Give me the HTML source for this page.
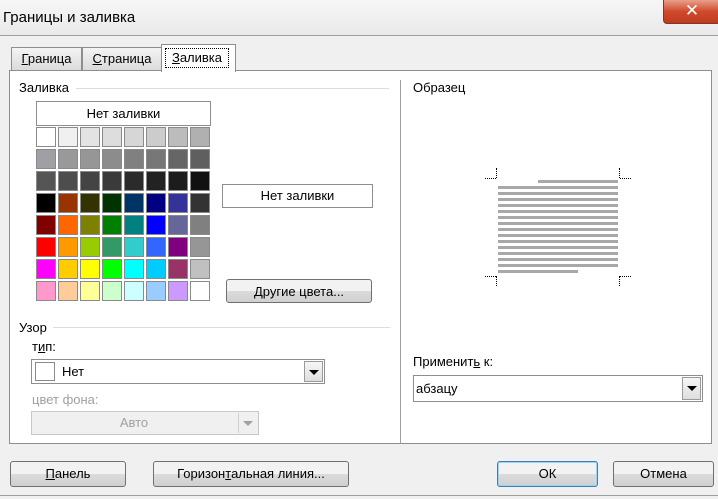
<!DOCTYPE html>
<html><head><meta charset="utf-8"><style>
*{box-sizing:border-box;margin:0;padding:0}
body{width:718px;height:499px;overflow:hidden;background:#f0f0f0;font-family:"Liberation Sans","DejaVu Sans",sans-serif;font-size:13px;color:#000;position:relative}
.a{position:absolute}
.title{left:0;top:0;width:718px;height:36px;background:linear-gradient(#f6f6f6,#eaeaea);border-bottom:1px solid #a0a0a0}
.title span{position:absolute;left:3px;top:9px;font-size:15px}
.close{left:663px;top:0;width:58px;height:24px;border:1px solid #7a3a2a;border-top:none;border-radius:0 0 4px 4px;background:linear-gradient(#e8a08a,#d04a2c 50%,#c03a20);color:#fff;font-size:17px;font-weight:bold;text-align:center;line-height:22px}
.tab{top:47px;height:24px;border:1px solid #8e8e8e;border-bottom:none;background:linear-gradient(#f4f4f4,#dadada);text-align:center;line-height:22px;font-size:13px}
.panel{left:9px;top:70px;width:703px;height:374px;background:#fff;border:1px solid #8e8e8e}
.box{background:#fff;border:1px solid #8e8e8e;text-align:center}
.btn{border:1px solid #707070;border-radius:3px;background:linear-gradient(#f2f2f2 50%,#dcdcdc 50%,#d0d0d0);text-align:center;line-height:23px;font-size:13px}
.cell{position:absolute;width:20px;height:20px;border:1px solid #8a8a8a}
.hr{height:1px;background:#dcdcdc}
.dd{position:absolute;top:1px;right:1px;width:19px;bottom:1px;border:1px solid #9a9a9a;background:linear-gradient(#f6f6f6,#dedede)}
.dd:after{content:"";position:absolute;left:4px;top:8px;border-left:5px solid transparent;border-right:5px solid transparent;border-top:5px solid #000}
.ln{position:absolute;height:3px;background:#a8a8a8}
.dv{position:absolute;border-left:1px dotted #000;width:0;height:10px}
.dh{position:absolute;border-top:1px dotted #000;height:0;width:11px}
u{text-decoration:underline}
</style></head><body>
<div class="a title"><span>Границы и заливка</span></div>
<div class="a close">✕</div>
<div class="a tab" style="left:11px;width:71px"><u>Г</u>раница</div>
<div class="a tab" style="left:82px;width:80px"><u>С</u>траница</div>
<div class="a panel"></div>
<div class="a" style="left:161px;top:44px;width:75px;height:28px;background:#fff;border:1px solid #8e8e8e;border-bottom:none"></div>
<div class="a" style="left:165px;top:48px;width:64px;height:20px;border:1px dotted #000;text-align:center;line-height:18px"><u>З</u>аливка</div>

<div class="a" style="left:19px;top:80px">Заливка</div>
<div class="a hr" style="left:76px;top:88px;width:313px"></div>
<div class="a box" style="left:36px;top:101px;width:175px;height:25px;line-height:23px">Нет заливки</div>
<div class="a" id="pal" style="left:36px;top:127px"></div>
<div class="a box" style="left:222px;top:184px;width:151px;height:24px;line-height:22px">Нет заливки</div>
<div class="a btn" style="left:226px;top:279px;width:146px;height:24px">Другие цвета...</div>

<div class="a" style="left:19px;top:320px">Узор</div>
<div class="a hr" style="left:53px;top:327px;width:337px"></div>
<div class="a" style="left:32px;top:339px">т<u>и</u>п:</div>
<div class="a box" style="left:31px;top:359px;width:294px;height:25px;text-align:left">
<div class="a" style="left:3px;top:2px;width:20px;height:19px;border:1px solid #8a8a8a"></div>
<span class="a" style="left:30px;top:4px">Нет</span><div class="dd"></div></div>
<div class="a" style="left:32px;top:392px;color:#a0a0a0">цвет фона:</div>
<div class="a" style="left:31px;top:411px;width:228px;height:24px;background:#f0f0f0;border:1px solid #c8c8c8;color:#a0a0a0;text-align:center;line-height:22px;padding-right:22px">Авто
<div style="position:absolute;right:1px;top:1px;width:19px;height:20px;border-left:1px solid #d0d0d0"><div style="position:absolute;left:4px;top:8px;border-left:5px solid transparent;border-right:5px solid transparent;border-top:5px solid #a0a0a0"></div></div></div>

<div class="a" style="left:400px;top:80px;width:1px;height:363px;background:#a0a0a0"></div>
<div class="a" style="left:413px;top:80px">Образец</div>
<div id="prev"></div>
<div class="dv" style="left:496px;top:168px"></div><div class="dh" style="left:485px;top:178px"></div>
<div class="dv" style="left:619px;top:168px"></div><div class="dh" style="left:620px;top:178px"></div>
<div class="dv" style="left:496px;top:276px"></div><div class="dh" style="left:485px;top:276px"></div>
<div class="dv" style="left:619px;top:276px"></div><div class="dh" style="left:620px;top:276px"></div>

<div class="a" style="left:413px;top:354px">Применит<u>ь</u> к:</div>
<div class="a box" style="left:413px;top:375px;width:290px;height:27px;text-align:left"><span class="a" style="left:2px;top:5px">абзацу</span><div class="dd"></div></div>

<div class="a btn" style="left:10px;top:461px;width:116px;height:26px;line-height:24px"><u>П</u>анель</div>
<div class="a btn" style="left:153px;top:461px;width:196px;height:26px;line-height:24px">Горизон<u>т</u>альная линия...</div>
<div class="a btn" style="left:497px;top:461px;width:101px;height:26px;line-height:24px;border-color:#3c7fb1;box-shadow:inset 0 0 0 1px #9fd3f5">ОК</div>
<div class="a btn" style="left:613px;top:461px;width:101px;height:26px;line-height:24px">Отмена</div>
<div class="a" style="left:0;top:495px;width:718px;height:1px;background:#a0a0a0"></div>
<script>
var c=["fff","f0f0f0","e3e3e3","ddd","d6d6d6","ccc","bcbcbc","b0b0b0",
"a0a0a4","999","969696","8c8c8c","808080","777","666","5f5f5f",
"555","4d4d4d","444","3a3a3a","2b2b2b","222","1c1c1c","111",
"000","993300","333300","003300","003366","000080","333399","333",
"800000","ff6600","808000","008000","008080","0000ff","666699","808080",
"ff0000","ff9900","99cc00","339966","33cccc","3366ff","800080","969696",
"ff00ff","ffcc00","ffff00","00ff00","00ffff","00ccff","993366","c0c0c0",
"ff99cc","ffcc99","ffff99","ccffcc","ccffff","99ccff","cc99ff","fff"];
var h="";for(var i=0;i<64;i++){h+='<div class="cell" style="left:'+(i%8)*22+'px;top:'+Math.floor(i/8)*22+'px;background:#'+c[i]+'"></div>';}
document.getElementById("pal").innerHTML=h;
var p='<div class="ln" style="left:538px;top:180px;width:80px"></div>';
for(var j=0;j<14;j++)p+='<div class="ln" style="left:498px;top:'+(186+j*6)+'px;width:120px"></div>';
p+='<div class="ln" style="left:498px;top:270px;width:80px"></div>';
document.getElementById("prev").innerHTML=p;
</script>
</body></html>
